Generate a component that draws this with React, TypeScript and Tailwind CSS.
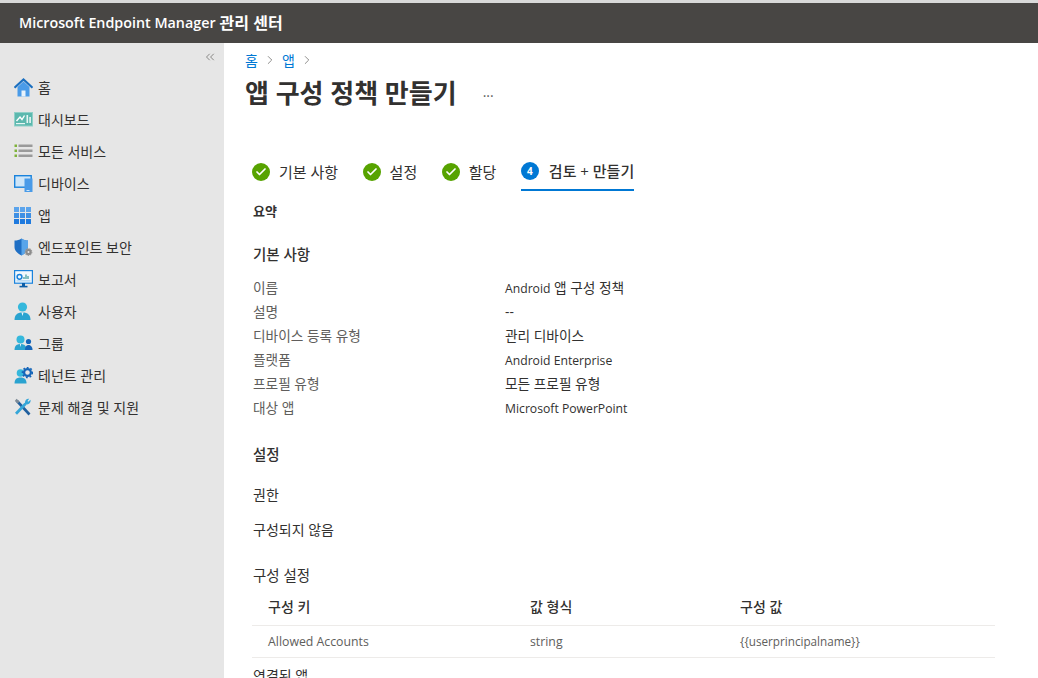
import type { ReactNode } from 'react';
import { ChevronRight, ChevronsLeft, Check } from 'lucide-react';

const FONT = "font-['Open_Sans','Noto_Sans_CJK_KR',sans-serif]";

function HomeIcon() {
  return (
    <svg width="19" height="19" viewBox="0 0 19 19">
      <path d="M3.5 9V18.5H15.5V9L9.5 3.5Z" fill="#4a9be8" />
      <path d="M7.5 12.5H11.5V18.5H7.5Z" fill="#e8f3fc" />
      <path d="M0.5 9.8L9.5 1.5L18.5 9.8" fill="none" stroke="#1a6fc0" strokeWidth="2.2" />
    </svg>
  );
}

function DashboardIcon() {
  return (
    <svg width="19" height="15" viewBox="0 0 19 15">
      <rect x="0.5" y="0.5" width="18" height="13.5" fill="#5cb8ae" stroke="#8fd0c8" />
      <path d="M2.5 9L6 5L8 7.5L10.5 3.5" fill="none" stroke="#fff" strokeWidth="1.4" />
      <rect x="12.5" y="3" width="1.6" height="8" fill="#e8f6f4" />
      <rect x="15.3" y="5" width="1.6" height="6" fill="#e8f6f4" />
      <rect x="2" y="11" width="9" height="1.2" fill="#e8f6f4" />
    </svg>
  );
}

function ServicesIcon() {
  return (
    <svg width="19" height="14" viewBox="0 0 19 14">
      {[0.5, 5.5, 10.5].map((y) => (
        <g key={y}>
          <rect x="0.5" y={y} width="2.5" height="2.5" fill="#7fb23a" />
          <rect x="4.5" y={y} width="14" height="2.5" fill="#9a9a9a" />
        </g>
      ))}
    </svg>
  );
}

function DevicesIcon() {
  return (
    <svg width="19" height="17" viewBox="0 0 19 17">
      <rect x="0.7" y="0.7" width="16.5" height="11.5" fill="#cfe6f8" stroke="#1a83dc" strokeWidth="1.4" />
      <rect x="10.5" y="3.5" width="8" height="13.5" fill="#4a9be8" />
      <rect x="12.5" y="15" width="3" height="1" fill="#cfe6f8" />
    </svg>
  );
}

function AppsIcon() {
  const cells = [0, 6, 12];
  return (
    <svg width="17" height="17" viewBox="0 0 17 17">
      {cells.map((y) =>
        cells.map((x) => (
          <rect key={`${x}-${y}`} x={x} y={y} width="5" height="5" fill={y === 0 ? '#5ba4ec' : y === 6 ? '#3f90e4' : '#1f7ade'} />
        )),
      )}
    </svg>
  );
}

function ShieldIcon() {
  return (
    <svg width="19" height="19" viewBox="0 0 19 19">
      <path d="M7.5 0.5C9.5 2 11.5 2.5 14 2.5V9C14 13 11 15.5 7.5 17.5C4 15.5 0.5 13 0.5 9V2.5C3 2.5 5.5 2 7.5 0.5Z" fill="#1f6fc4" />
      <path d="M7.5 0.5C9.5 2 11.5 2.5 14 2.5V9C14 13 11 15.5 7.5 17.5Z" fill="#58a5ea" />
      <circle cx="14.5" cy="14" r="3.2" fill="#8a8a8a" stroke="#9c9c9c" strokeWidth="1.4" strokeDasharray="1.3 0.9" />
      <circle cx="14.5" cy="14" r="1" fill="#e6e6e6" />
    </svg>
  );
}

function ReportIcon() {
  return (
    <svg width="19" height="18" viewBox="0 0 19 18">
      <rect x="0.6" y="0.6" width="17.8" height="12.6" fill="#f2f8fd" stroke="#1a83dc" strokeWidth="1.2" />
      <circle cx="5.5" cy="6.8" r="2.4" fill="none" stroke="#1a83dc" strokeWidth="1.5" />
      <path d="M10 9V7M12 9V4.5M14 9V6" stroke="#3b9a9a" strokeWidth="1.2" />
      <rect x="2.5" y="10.4" width="14" height="1" fill="#9ccbee" />
      <rect x="8" y="13" width="3" height="3" fill="#0d5ea8" />
      <rect x="5.5" y="15.8" width="8" height="1.6" fill="#0d5ea8" />
    </svg>
  );
}

function UserIcon() {
  return (
    <svg width="17" height="18" viewBox="0 0 17 18">
      <circle cx="8.5" cy="5" r="4.6" fill="#35b8dc" />
      <path d="M0.5 18C0.5 13 3 10.5 8.5 10.5C14 10.5 16.5 13 16.5 18Z" fill="#2aa3d0" />
      <path d="M7.5 10.5H9.5L8.5 14Z" fill="#e8f6fb" />
    </svg>
  );
}

function GroupIcon() {
  return (
    <svg width="19" height="16" viewBox="0 0 19 16">
      <circle cx="6.5" cy="4.5" r="4" fill="#35b8dc" />
      <path d="M0.5 15C0.5 11 2.5 9 6.5 9C10.5 9 12.5 11 12.5 15Z" fill="#2aa3d0" />
      <path d="M5.8 9H7.2L6.5 12Z" fill="#e8f6fb" />
      <circle cx="14.5" cy="6.5" r="2.6" fill="#1565b8" />
      <path d="M11 15C11 11.5 12.5 10 14.5 10C16.5 10 18.5 11.5 18.5 15Z" fill="#1565b8" />
    </svg>
  );
}

function TenantIcon() {
  return (
    <svg width="19" height="17" viewBox="0 0 19 17">
      <circle cx="6.5" cy="6" r="3.8" fill="#35b8dc" />
      <path d="M0.5 16.5C0.5 12.5 2.5 10.5 6.5 10.5C10.5 10.5 12.5 12.5 12.5 16.5Z" fill="#2aa3d0" />
      <circle cx="13.5" cy="5.5" r="3.4" fill="none" stroke="#1565b8" strokeWidth="2.2" />
      <circle cx="13.5" cy="5.5" r="5" fill="none" stroke="#1565b8" strokeWidth="1.6" strokeDasharray="1.8 1.9" />
    </svg>
  );
}

function ToolsIcon() {
  return (
    <svg width="17" height="18" viewBox="0 0 17 18">
      <path d="M3 3L15.5 16.5" stroke="#1f5f9e" strokeWidth="2.6" />
      <path d="M0.8 3L2.6 0.8L5.5 3.6L3.8 5.4Z" fill="#7d8a96" />
      <path d="M11.5 5.8L2 15.8" fill="none" stroke="#35a6d8" strokeWidth="2.8" />
      <path d="M16.5 1.8L14.3 3.8L13.5 3L15.2 0.8C13 0.3 11 2 11 4.2V6.5H13.2C15.4 6.5 17 4.2 16.5 1.8Z" fill="#35a6d8" />
    </svg>
  );
}

const navItems: { label: string; icon: ReactNode }[] = [
  { label: '홈', icon: <HomeIcon /> },
  { label: '대시보드', icon: <DashboardIcon /> },
  { label: '모든 서비스', icon: <ServicesIcon /> },
  { label: '디바이스', icon: <DevicesIcon /> },
  { label: '앱', icon: <AppsIcon /> },
  { label: '엔드포인트 보안', icon: <ShieldIcon /> },
  { label: '보고서', icon: <ReportIcon /> },
  { label: '사용자', icon: <UserIcon /> },
  { label: '그룹', icon: <GroupIcon /> },
  { label: '테넌트 관리', icon: <TenantIcon /> },
  { label: '문제 해결 및 지원', icon: <ToolsIcon /> },
];

const summaryRows: [string, ReactNode][] = [
  ['이름', <><span className="text-[12.2px]">Android</span> 앱 구성 정책</>],
  ['설명', '--'],
  ['디바이스 등록 유형', '관리 디바이스'],
  ['플랫폼', <span className="text-[12.2px]">Android Enterprise</span>],
  ['프로필 유형', '모든 프로필 유형'],
  ['대상 앱', <span className="text-[12.2px]">Microsoft PowerPoint</span>],
];

function DoneStep({ label }: { label: string }) {
  return (
    <div className="mr-[24.5px] flex h-[36px] items-center gap-[9px] pb-[2px] text-[15px] text-[#323130]">
      <span className="flex h-[18px] w-[18px] items-center justify-center rounded-full bg-[#57a300]">
        <Check size={12} strokeWidth={3.5} className="text-white" />
      </span>
      {label}
    </div>
  );
}

export default function App() {
  return (
    <div className={`flex h-[678px] w-[1038px] flex-col overflow-hidden border-t-[3px] border-[#d9d9d9] bg-white ${FONT}`}>
      <header className="flex h-[40px] shrink-0 items-center bg-[#484644] pl-[19px] text-[14.3px] font-semibold text-white">
        Microsoft Endpoint Manager <span className="ml-[4px] text-[16px]">관리 센터</span>
      </header>

      <div className="flex min-h-0 flex-1">
        <aside className="w-[224px] shrink-0 bg-[#e6e6e6]">
          <div className="flex h-[28px] items-center justify-end pr-[7px]">
            <ChevronsLeft size={14} strokeWidth={1.2} className="text-[#605e5c]" />
          </div>
          <nav>
            {navItems.map((item) => (
              <div key={item.label} className="flex h-[32px] items-center text-[14px] text-[#323130]">
                <span className="flex w-[38px] shrink-0 justify-start pl-[14px]">{item.icon}</span>
                {item.label}
              </div>
            ))}
          </nav>
        </aside>

        <main className="min-w-0 flex-1 pl-[21px]">
          <div className="flex h-[34px] items-center gap-[5px] text-[14px] text-[#0078d4]">
            <span>홈</span>
            <ChevronRight size={14} strokeWidth={1.2} className="text-[#605e5c]" />
            <span>앱</span>
            <ChevronRight size={14} strokeWidth={1.2} className="text-[#605e5c]" />
          </div>
          <div className="flex h-[32px] items-center">
            <h1 className="text-[26px] font-semibold text-[#323130]">앱 구성 정책 만들기</h1>
            <span className="mb-[4px] ml-[26px] text-[14px] text-[#605e5c]">...</span>
          </div>

          <div className="mt-[46px] flex pl-[7px]">
            <DoneStep label="기본 사항" />
            <DoneStep label="설정" />
            <DoneStep label="할당" />
            <div className="flex h-[36px] items-center gap-[10px] border-b-2 border-[#0078d4] pb-[2px] text-[15px] font-medium text-[#323130]">
              <span className="flex h-[18px] w-[18px] items-center justify-center rounded-full bg-[#0078d4] text-[10px] font-bold text-white">4</span>
              검토 + 만들기
            </div>
          </div>

          <div className="pl-[8px] text-[#323130]">
            <h2 className="mt-[11px] flex h-[20px] items-center text-[13px] font-bold">요약</h2>
            <h3 className="mt-[23px] flex h-[20px] items-center text-[14.5px] font-medium">기본 사항</h3>

            <dl className="mt-[11px]">
              {summaryRows.map(([label, value]) => (
                <div key={label} className="flex h-[24px] items-center text-[13.7px]">
                  <dt className="w-[252px] shrink-0 text-[#605e5c]">{label}</dt>
                  <dd>{value}</dd>
                </div>
              ))}
            </dl>

            <h3 className="mt-[25px] flex h-[20px] items-center text-[14.5px] font-medium">설정</h3>
            <p className="mt-[19px] flex h-[20px] items-center text-[14px]">권한</p>
            <p className="mt-[15px] flex h-[20px] items-center text-[14px]">구성되지 않음</p>
            <p className="mt-[27px] flex h-[20px] items-center text-[14.5px]">구성 설정</p>

            <div className="-ml-px mt-[2px] w-[743px] text-[14px]">
              <div className="flex h-[38px] items-center border-b border-[#edebe9] pl-[16px] font-medium">
                <span className="w-[262px]">구성 키</span>
                <span className="w-[210px]">값 형식</span>
                <span>구성 값</span>
              </div>
              <div className="flex h-[32px] items-center border-b border-[#edebe9] pl-[16px] pt-[1px] text-[12.3px] text-[#605e5c]">
                <span className="w-[262px]">Allowed Accounts</span>
                <span className="w-[210px]">string</span>
                <span className="text-[11.7px]">{'{{userprincipalname}}'}</span>
              </div>
            </div>

            <p className="mt-[7px] flex h-[20px] items-center text-[14px]">연결된 앱</p>
          </div>
        </main>
      </div>
    </div>
  );
}
